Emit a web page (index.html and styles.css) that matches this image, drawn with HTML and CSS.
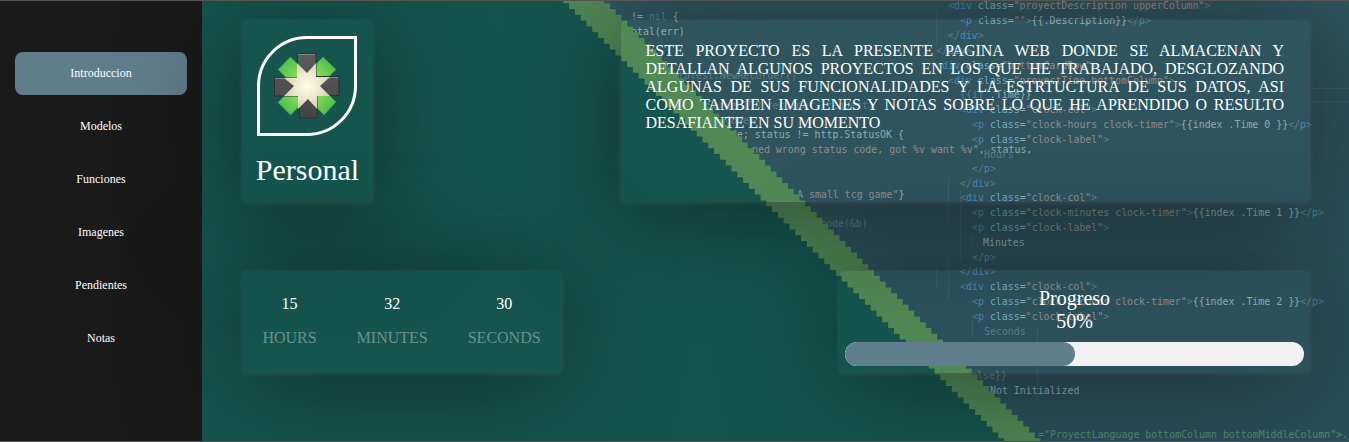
FILE: index.html
```html
<!DOCTYPE html>
<html lang="es">
<head>
<meta charset="utf-8">
<title>Proyecto Personal</title>
<link rel="stylesheet" href="styles.css">
</head>
<body>
<div class="page">
  <svg class="backdrop" width="1349" height="442" viewBox="0 0 1349 442" aria-hidden="true">
    <defs>
      <linearGradient id="slate" x1="0" y1="0" x2="0" y2="1"><stop offset="0" stop-color="#30555f"/><stop offset="1" stop-color="#2b505b"/></linearGradient>
    </defs>
    <rect width="1349" height="442" fill="#15554e"/>
    <path id="slope" fill="url(#slate)"/>
    <g class="code" id="code"></g>
    <g stroke="#59747a" stroke-opacity=".3">
      <path d="M948.5 175V226M948.5 255V300M936.5 10V45M960.5 190V260M936.5 268V290M972.5 236V252M972.5 320V338M1037.5 325V400M1312 88.5H1349M1312 101.5H1349"/>
    </g>
    <path id="stripe" fill="#508856"/>
  </svg>
  <nav class="sidebar">
    <a class="link active">Introduccion</a>
    <a class="link">Modelos</a>
    <a class="link">Funciones</a>
    <a class="link">Imagenes</a>
    <a class="link">Pendientes</a>
    <a class="link">Notas</a>
  </nav>
  <main class="content">
    <div class="row top">
      <section class="card brand">
        <div class="leaf">
          <svg width="68" height="68" viewBox="0 0 68 68">
            <defs>
              <linearGradient id="steel" x1="0" y1="0" x2="0" y2="1"><stop offset="0" stop-color="#5c5c5e"/><stop offset="1" stop-color="#444446"/></linearGradient>
              <radialGradient id="green" gradientUnits="userSpaceOnUse" cx="34" cy="34" r="38"><stop offset=".35" stop-color="#8bdc55"/><stop offset="1" stop-color="#3fb84d"/></radialGradient>
              <radialGradient id="cream"><stop offset="0" stop-color="#fffbe6"/><stop offset=".5" stop-color="#f0ead2"/><stop offset="1" stop-color="#d3d2b5"/></radialGradient>
            </defs>
            <g fill="url(#green)" stroke="#3a9b41" stroke-width=".7">
              <path d="M5 17.500L17.500 5L63 50L51 63Z"/><path d="M50 5L63 17.500L17.500 63L5 50.500Z"/>
            </g>
            <g fill="url(#steel)" stroke="#2c3333">
              <path d="M24.500 1.500H43V24.500H66V43.500H44V66H26.500V44H1.500V26H24.500Z"/>
            </g>
            <path d="M25 2.500H42M2 26.500H24M44 25.500H65" stroke="#858585"/>
            <path fill="url(#cream)" d="M24 11L34 21L43 11V25H57L47 34L57 44H44V57L35 47L25 57V44H11L21 34L11 26H24Z"/>
          </svg>
        </div>
        <h1 class="title">Personal</h1>
      </section>
      <section class="card about">
        <p class="text">ESTE PROYECTO ES LA PRESENTE PAGINA WEB DONDE SE ALMACENAN Y DETALLAN ALGUNOS PROYECTOS EN LOS QUE HE TRABAJADO, DESGLOZANDO ALGUNAS DE SUS FUNCIONALIDADES Y LA ESTRTUCTURA DE SUS DATOS, ASI COMO TAMBIEN IMAGENES Y NOTAS SOBRE LO QUE HE APRENDIDO O RESULTO DESAFIANTE EN SU MOMENTO</p>
      </section>
    </div>
    <div class="row bottom">
      <section class="card clock">
        <div class="unit"><span>15</span><span class="label">HOURS</span></div>
        <div class="unit"><span>32</span><span class="label">MINUTES</span></div>
        <div class="unit"><span>30</span><span class="label">SECONDS</span></div>
      </section>
      <section class="card progress">
        <div class="heading">Progreso</div>
        <div class="heading">50%</div>
        <div class="bar"><div class="fill" style="width:50%"></div></div>
      </section>
    </div>
  </main>
</div>
<script src="backdrop.js"></script>
</body>
</html>
```
FILE: styles.css
```css
* { box-sizing: border-box; }
body { margin: 0; font-family: "Liberation Serif", "Times New Roman", serif; color: #fff; }
.page { position: relative; display: flex; width: 1349px; height: 442px; overflow: hidden; border-top: 1px solid #555; border-bottom: 1px solid #45565a; }
.backdrop { position: absolute; left: 0; top: -1px; }
.sidebar { position: relative; width: 202px; padding: 51px 15px 0; background: #1a1a1a; display: flex; flex-direction: column; gap: 10px; flex: none; }
.link { height: 43px; border-radius: 8px; display: flex; align-items: center; justify-content: center; font-size: 12px; }
.active { background: #607d8b; }
.content { position: relative; flex: 1; padding: 19px 39px 0 40px; }
.row { display: flex; justify-content: space-between; }
.top { height: 182px; margin-bottom: 69px; }
.bottom { height: 102px; }
.card { border-radius: 5px; box-shadow: 0 1px 4px rgba(100, 100, 100, .4), 0 10px 110px rgba(10, 10, 10, .5); }
.brand { width: 131px; padding: 16px 1px 0 0; display: flex; flex-direction: column; align-items: center; }
.leaf { width: 100px; height: 100px; border: 3px solid #fff; border-radius: 50% 0; display: flex; align-items: center; justify-content: center; }
.title { margin: 17px 0 0 1px; font-size: 30px; font-weight: 400; line-height: 34px; }
.about { width: 689.5px; padding: 22px 26px 0 25px; }
.text { margin: 0; font-size: 16px; line-height: 18px; text-align: justify; }
.clock { width: 320px; display: flex; justify-content: center; gap: 40px; padding: 24px 1px 0 0; }
.unit { display: flex; flex-direction: column; align-items: center; gap: 16px; font-size: 16px; line-height: 18px; }
.label { color: #6b908b; }
.progress { width: 471px; padding: 16px 6px 0; text-align: center; }
.heading { font-size: 20px; line-height: 23px; }
.bar { height: 24px; margin-top: 9px; border-radius: 12px; background: #f1f1f1; overflow: hidden; }
.fill { height: 24px; border-radius: 12px; background: #607d8b; }
.code { font-family: "DejaVu Sans Mono", monospace; font-size: 9.92px; }
.plain { fill: #8fabb1; }
.tag { fill: #4688b3; }
.attr { fill: #6eaac2; }
.str { fill: #8f8c87; }
.dim { fill: #5d7c84; }
.green { fill: #4b9070; }
```
FILE: backdrop.js
```js
// Diagonal pixel stairs separating the two halves of the backdrop
const step = 5.8;
let lower = "M563.3 0";
let upper = "";
let slope = "M604.3 0";
for (let i = 0; i < 77; i++) {
  const y = (3.2 + i * step).toFixed(1);
  lower += `V${y}H${(563.3 + (i + 1) * step).toFixed(1)}`;
  const x = (604.3 + (i + 1) * 5.74).toFixed(1);
  slope += `V${y}H${x}`;
  upper = `V${y}H${(604.3 + i * 5.74).toFixed(1)}` + upper;
}
document.getElementById("stripe").setAttribute("d", lower + "H1046.3" + upper + "V0Z");
document.getElementById("slope").setAttribute("d", slope + "V442H1349V0Z");

// [x, baseline, [[class, text], ...]]
const open = (name, cls) => [["dim", "<"], ["tag", name], ["attr", " class"], ["plain", "="], ["str", `"${cls}"`], ["dim", ">"]];
const close = name => [["dim", "</"], ["tag", name], ["dim", ">"]];
const timer = (cls, n) => [...open("p", cls + " clock-timer"), ["plain", `{{index .Time ${n} }}`], ...close("p")];
const lines = [
  [631, 20, [["plain", "!= "], ["tag", "nil"], ["plain", " {"]]],
  [631, 35, [["plain", "otal(err)"]]],
  [672, 79, [["dim", "ttptest.NewRecorder()"]]],
  [707, 109, [["dim", "ServeHTTP(recorder, request)"]]],
  [725, 124, [["dim", "Code)"]]],
  [731, 138, [["plain", "de; status != http.StatusOK {"]]],
  [752, 153, [["str", "ned wrong status code, got %v want %v\""], ["plain", ", status,"]]],
  [797, 198, [["str", "A small tcg game\""], ["plain", "}"]]],
  [820, 227, [["dim", "code(&b)"]]],
  [948, 9, open("div", "proyectDescription upperColumn")],
  [960, 24, [...open("p", ""), ["plain", "{{.Description}}"], ...close("p")]],
  [948, 39, close("div")],
  [936, 54, close("div")],
  [936, 69, open("div", "bottomCardRow")],
  [948, 84, open("div", "proyectTime bottomColumn")],
  [960, 98, [["dim", "{{if "], ["plain", ".Time}}"]]],
  [960, 113, open("div", "clock-col")],
  [972, 128, timer("clock-hours", 0)],
  [972, 143, open("p", "clock-label")],
  [984, 158, [["dim", "Hours"]]],
  [972, 172, close("p")],
  [960, 187, close("div")],
  [960, 201, open("div", "clock-col")],
  [972, 216, timer("clock-minutes", 1)],
  [972, 231, open("p", "clock-label")],
  [983, 246, [["plain", "Minutes"]]],
  [972, 261, close("p")],
  [960, 275, close("div")],
  [960, 290, open("div", "clock-col")],
  [972, 305, timer("clock-seconds", 2)],
  [972, 320, open("p", "clock-label")],
  [984, 335, [["dim", "Seconds"]]],
  [971, 379, [["dim", "else}}"]]],
  [990, 394, [["plain", "Not Initialized"]]],
  [1038, 438, [["green", "=\"ProyectLanguage bottomColumn bottomMiddleColumn\">."]]]
];
const ns = "http://www.w3.org/2000/svg";
for (const [x, y, parts] of lines) {
  const line = document.createElementNS(ns, "text");
  line.setAttribute("x", x);
  line.setAttribute("y", y);
  for (const [cls, text] of parts) {
    const span = document.createElementNS(ns, "tspan");
    span.setAttribute("class", cls);
    span.textContent = text;
    line.append(span);
  }
  document.getElementById("code").append(line);
}
```
